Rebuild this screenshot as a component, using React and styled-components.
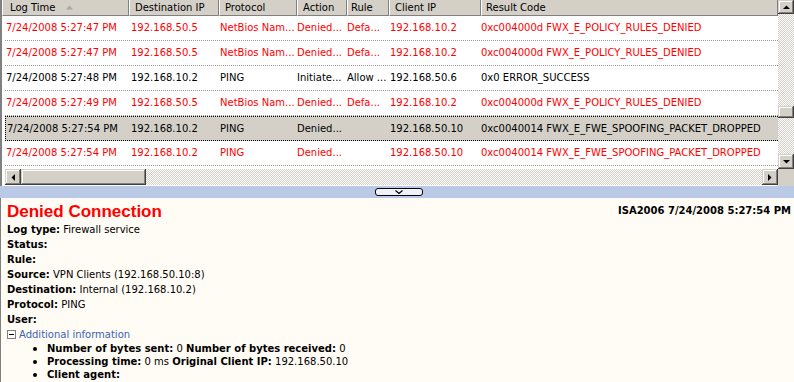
import React from 'react';
import styled, { createGlobalStyle, css } from 'styled-components';

const Global = createGlobalStyle`
  html, body { margin: 0; padding: 0; background: #fff; }
  body { width: 794px; height: 382px; overflow: hidden; }
`;

const HEAD_COLS = '127px 90px 78px 50px 42px 92px 1fr';
const ROW_COLS = '124px 90px 78px 50px 42px 92px 1fr';
const FACE = '#d4d0c8';

const Frame = styled.div`
  width: 794px;
  height: 382px;
  display: flex;
  flex-direction: column;
  overflow: hidden;
  font-family: "DejaVu Sans", Verdana, sans-serif;
`;

const TopPane = styled.div`
  flex: none;
  height: 186px;
  display: grid;
  grid-template-columns: 1fr 16px;
  grid-template-rows: 169px 17px;
  border-left: 2px solid #808080;
`;

const ListView = styled.div`
  background: #fff;
  overflow: hidden;
`;

const HeaderRow = styled.div`
  display: grid;
  grid-template-columns: ${HEAD_COLS};
  height: 16px;
`;

const HeaderCell = styled.div`
  background: ${FACE};
  border-left: 1px solid #fff;
  border-right: 1px solid #808080;
  border-bottom: 1px solid #808080;
  padding-left: ${(p) => p.$pad}px;
  font-size: 10px;
  line-height: 15px;
  color: #000;
  white-space: nowrap;
  overflow: hidden;
  display: flex;
  align-items: center;
`;

const SortArrow = styled.svg`
  margin-left: 10px;
  flex: none;
`;

const Row = styled.div`
  display: grid;
  grid-template-columns: ${ROW_COLS};
  margin-left: 3px;
  height: 24px;
  border-bottom: 1px dotted #9a9a9a;
  color: ${(p) => (p.$red ? '#ff0000' : '#000')};
  ${(p) =>
    p.$selected &&
    css`
      background: ${FACE};
      height: 23px;
      border-top: 1px dotted #000;
      border-bottom: 1px dotted #000;
      border-left: 1px dotted #000;
      grid-template-columns: 123px 90px 78px 50px 42px 92px 1fr;
    `}
`;

const Cell = styled.div`
  padding-left: ${(p) => p.$pad}px;
  font-size: 10px;
  line-height: 23px;
  white-space: nowrap;
  overflow: hidden;
`;

const VScroll = styled.div`
  display: flex;
  flex-direction: column;
  background-color: #fff;
  background-image: repeating-conic-gradient(${FACE} 0 25%, #fff 0 50%);
  background-size: 2px 2px;
`;

const HScroll = styled.div`
  display: flex;
  height: 16px;
  margin-left: 3px;
  background-color: #fff;
  background-image: repeating-conic-gradient(${FACE} 0 25%, #fff 0 50%);
  background-size: 2px 2px;
`;

const Btn = styled.div`
  flex: none;
  width: ${(p) => p.$w || 16}px;
  height: ${(p) => p.$h || 16}px;
  background: ${FACE};
  box-shadow: inset -1px -1px #404040, inset 1px 1px ${FACE}, inset -2px -2px #808080,
    inset 2px 2px #fff;
  display: flex;
  align-items: center;
  justify-content: center;
`;

const Spacer = styled.div`
  flex: ${(p) => p.$grow || 1};
`;

const Corner = styled.div`
  background: ${FACE};
`;

const Splitter = styled.div`
  flex: none;
  height: 12px;
  background: #b9c9e6;
  display: flex;
  justify-content: center;
  align-items: center;
  padding-left: 4px;
`;

const SplitButton = styled.div`
  width: 46px;
  height: 6px;
  border: 1px solid #000;
  border-radius: 3px;
  background: #eef2fa;
  display: flex;
  align-items: center;
  justify-content: center;
`;

const Detail = styled.div`
  flex: 1;
  background: #fffbf5;
  border-left: 1px solid #808080;
  padding: 4px 3px 0 6px;
  font-size: 10px;
  color: #000;
`;

const TitleRow = styled.div`
  display: flex;
  justify-content: space-between;
  align-items: flex-start;
  height: 20px;
`;

const Title = styled.div`
  font-family: "Liberation Sans", Arial, sans-serif;
  font-weight: bold;
  font-size: 17px;
  line-height: 20px;
  color: #ff0000;
`;

const Stamp = styled.div`
  font-weight: bold;
  margin-top: 3px;
  line-height: 12px;
`;

const Line = styled.div`
  line-height: 15px;
  height: 15px;
  white-space: nowrap;
`;

const Label = styled.b`
  font-weight: bold;
`;

const Expander = styled.div`
  display: flex;
  align-items: center;
  line-height: 15px;
  height: 15px;
  color: #3a64b4;
  gap: 3px;
`;

const Bullets = styled.ul`
  list-style: none;
  margin: 0;
  padding: 0;
`;

const Item = styled.li`
  display: flex;
  align-items: center;
  height: 13px;
  line-height: 13px;
  white-space: nowrap;
`;

const Dot = styled.span`
  width: 4px;
  height: 4px;
  border-radius: 50%;
  background: #000;
  margin: 0 10px 0 26px;
  flex: none;
`;

const columns = [
  { title: 'Log Time', hpad: 7, pad: 1 },
  { title: 'Destination IP', hpad: 5, pad: 2 },
  { title: 'Protocol', hpad: 5, pad: 1 },
  { title: 'Action', hpad: 5, pad: 0 },
  { title: 'Rule', hpad: 3, pad: 0 },
  { title: 'Client IP', hpad: 5, pad: 1 },
  { title: 'Result Code', hpad: 4, pad: 0 },
];

const rows = [
  { red: true, v: ['7/24/2008 5:27:47 PM', '192.168.50.5', 'NetBios Nam...', 'Denied...', 'Defa...', '192.168.10.2', '0xc004000d FWX_E_POLICY_RULES_DENIED'] },
  { red: true, v: ['7/24/2008 5:27:47 PM', '192.168.50.5', 'NetBios Nam...', 'Denied...', 'Defa...', '192.168.10.2', '0xc004000d FWX_E_POLICY_RULES_DENIED'] },
  { red: false, v: ['7/24/2008 5:27:48 PM', '192.168.10.2', 'PING', 'Initiate...', 'Allow ...', '192.168.50.6', '0x0 ERROR_SUCCESS'] },
  { red: true, v: ['7/24/2008 5:27:49 PM', '192.168.50.5', 'NetBios Nam...', 'Denied...', 'Defa...', '192.168.10.2', '0xc004000d FWX_E_POLICY_RULES_DENIED'] },
  { red: false, selected: true, v: ['7/24/2008 5:27:54 PM', '192.168.10.2', 'PING', 'Denied...', '', '192.168.50.10', '0xc0040014 FWX_E_FWE_SPOOFING_PACKET_DROPPED'] },
  { red: true, v: ['7/24/2008 5:27:54 PM', '192.168.10.2', 'PING', 'Denied...', '', '192.168.50.10', '0xc0040014 FWX_E_FWE_SPOOFING_PACKET_DROPPED'] },
];

const Tri = ({ dir }) => {
  const pts = {
    up: '0,4 7,4 3.5,0.5',
    down: '0,0 7,0 3.5,3.5',
    left: '4,0 4,7 0.5,3.5',
    right: '0,0 0,7 3.5,3.5',
  }[dir];
  const vertical = dir === 'up' || dir === 'down';
  return (
    <svg width={vertical ? 7 : 4} height={vertical ? 4 : 7} viewBox={vertical ? '0 0 7 4' : '0 0 4 7'}>
      <polygon points={pts} fill="#000" />
    </svg>
  );
};

export default function App() {
  return (
    <Frame>
      <Global />
      <TopPane>
        <ListView>
          <HeaderRow>
            {columns.map((c, i) => (
              <HeaderCell key={c.title} $pad={c.hpad}>
                {c.title}
                {i === 0 && (
                  <SortArrow width="8" height="5" viewBox="0 0 8 5">
                    <polygon points="0,4.5 7,4.5 3.5,0.5" fill="#a8a8a8" />
                  </SortArrow>
                )}
              </HeaderCell>
            ))}
          </HeaderRow>
          {rows.map((r, ri) => (
            <Row key={ri} $red={r.red} $selected={r.selected}>
              {r.v.map((t, ci) => (
                <Cell key={ci} $pad={columns[ci].pad}>
                  {t}
                </Cell>
              ))}
            </Row>
          ))}
        </ListView>
        <VScroll>
          <Btn $h={14}>
            <Tri dir="up" />
          </Btn>
          <Spacer $grow={91} />
          <Btn $h={12} />
          <Spacer $grow={36} />
          <Btn $h={15}>
            <Tri dir="down" />
          </Btn>
        </VScroll>
        <HScroll>
          <Btn>
            <Tri dir="left" />
          </Btn>
          <Btn $w={125} />
          <Spacer />
          <Btn>
            <Tri dir="right" />
          </Btn>
        </HScroll>
        <Corner />
      </TopPane>
      <Splitter>
        <SplitButton>
          <svg width="8" height="4" viewBox="0 0 8 4">
            <polyline points="0.5,0.5 4,3.5 7.5,0.5" fill="none" stroke="#000" strokeWidth="1.2" />
          </svg>
        </SplitButton>
      </Splitter>
      <Detail>
        <TitleRow>
          <Title>Denied Connection</Title>
          <Stamp>ISA2006 7/24/2008 5:27:54 PM</Stamp>
        </TitleRow>
        <Line><Label>Log type:</Label> Firewall service</Line>
        <Line><Label>Status:</Label></Line>
        <Line><Label>Rule:</Label></Line>
        <Line><Label>Source:</Label> VPN Clients (192.168.50.10:8)</Line>
        <Line><Label>Destination:</Label> Internal (192.168.10.2)</Line>
        <Line><Label>Protocol:</Label> PING</Line>
        <Line><Label>User:</Label></Line>
        <Expander>
          <svg width="9" height="9" viewBox="0 0 9 9">
            <rect x="0.5" y="0.5" width="8" height="8" fill="#fff" stroke="#808080" />
            <line x1="2" y1="4.5" x2="7" y2="4.5" stroke="#000" />
          </svg>
          Additional information
        </Expander>
        <Bullets>
          <Item><Dot /><span><Label>Number of bytes sent:</Label> 0 <Label>Number of bytes received:</Label> 0</span></Item>
          <Item><Dot /><span><Label>Processing time:</Label> 0 ms <Label>Original Client IP:</Label> 192.168.50.10</span></Item>
          <Item><Dot /><span><Label>Client agent:</Label></span></Item>
        </Bullets>
      </Detail>
    </Frame>
  );
}
